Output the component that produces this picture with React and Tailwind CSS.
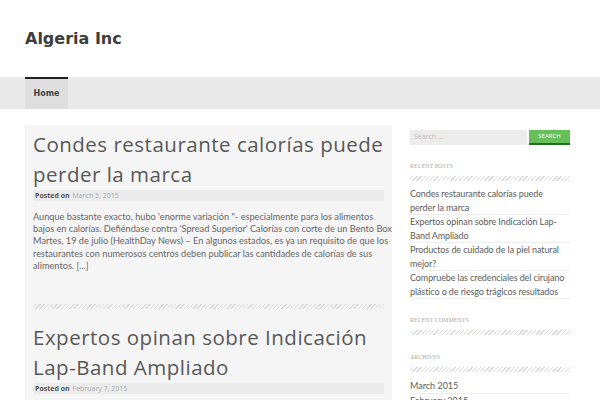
export default function App() {
  const hatch =
    "bg-[repeating-linear-gradient(-45deg,#d9d9d9_0px,#d9d9d9_1px,transparent_1px,transparent_3px)]";
  const recent = [
    "Condes restaurante calorías puede perder la marca",
    "Expertos opinan sobre Indicación Lap-Band Ampliado",
    "Productos de cuidado de la piel natural mejor?",
    "Compruebe las credenciales del cirujano plástico o de riesgo trágicos resultados",
  ];
  return (
    <div className="w-[600px] h-[400px] overflow-hidden bg-white font-['Open_Sans',sans-serif]">
      <header className="h-[77px] px-[25px] pt-[27px]">
        <h1 className="font-['DejaVu_Sans',sans-serif] font-bold text-[16px] leading-[24px] text-[#3d3d3d]">
          Algeria Inc
        </h1>
      </header>
      <nav className="h-[32px] bg-[#e9e9e9] px-[25px] flex">
        <div className="w-[43px] h-full bg-[#dedede] border-t-2 border-[#222] flex items-center justify-center">
          <span className="font-['DejaVu_Sans',sans-serif] font-bold text-[8px] text-[#444]">Home</span>
        </div>
      </nav>
      <div className="flex px-[25px] pt-[16px] gap-[18px]">
        <main className="w-[367px] shrink-0 bg-[#f5f5f5] px-[8px] pt-[4px] pb-4 overflow-hidden">
          <article>
            <h2 className="text-[20.5px] leading-[30px] text-[#585858] tracking-[0.5px]">
              Condes restaurante calorías puede perder la marca
            </h2>
            <div className="mt-[1px] h-[11px] bg-[#ebebeb] flex items-center px-[2px] text-[7px] leading-[10px]">
              <span className="font-bold text-[#555]">Posted on</span>
              <span className="ml-[3px] text-[#aaa]">March 5, 2015</span>
            </div>
            <p className="mt-[10px] whitespace-nowrap font-['Lato',sans-serif] text-[9.2px] leading-[12.2px] text-[#666]">
              {"Aunque bastante exacto, hubo 'enorme variación \"- especialmente para los alimentos"}
              <br />
              {"bajos en calorías. Defiéndase contra 'Spread Superior' Calorías con corte de un Bento Box"}
              <br />
              {"Martes, 19 de julio (HealthDay News) – En algunos estados, es ya un requisito de que los"}
              <br />
              {"restaurantes con numerosos centros deben publicar las cantidades de calorías de sus"}
              <br />
              {"alimentos. [...]"}
            </p>
          </article>
          <div className={`mt-[32px] h-[5px] ${hatch}`}></div>
          <article className="mt-[13px]">
            <h2 className="text-[20.5px] leading-[30px] text-[#585858] tracking-[0.5px]">
              Expertos opinan sobre Indicación Lap-Band Ampliado
            </h2>
            <div className="mt-[1px] h-[11px] bg-[#ebebeb] flex items-center px-[2px] text-[7px] leading-[10px]">
              <span className="font-bold text-[#555]">Posted on</span>
              <span className="ml-[3px] text-[#aaa]">February 7, 2015</span>
            </div>
          </article>
        </main>
        <aside className="w-[160px] shrink-0 pt-[5px]">
          <div className="flex gap-[2px] h-[15px]">
            <div className="w-[117px] bg-[#ececec] flex items-center px-[4px] text-[7px] text-[#bbb]">
              Search …
            </div>
            <div className="flex-1 bg-[#66c05a] border-b-2 border-[#1f6f1f] flex items-center justify-center text-[6px] text-white">
              SEARCH
            </div>
          </div>
          <h3 className="mt-[16px] font-['Liberation_Serif',serif] text-[6px] text-[#aaa] leading-[10px]">
            RECENT POSTS
          </h3>
          <div className={`mt-[5px] h-[5px] ${hatch}`}></div>
          <ul className="mt-[6px] font-['Lato',sans-serif] text-[9px] tracking-[-0.1px] leading-[13.5px] text-[#5c5c5c]">
            {recent.map((t) => (
              <li key={t} className="border-b border-[#eee]">
                {t}
              </li>
            ))}
          </ul>
          <h3 className="mt-[16px] font-['Liberation_Serif',serif] text-[6px] text-[#aaa] leading-[10px]">
            RECENT COMMENTS
          </h3>
          <div className={`mt-[5px] h-[5px] ${hatch}`}></div>
          <h3 className="mt-[17px] font-['Liberation_Serif',serif] text-[6px] text-[#aaa] leading-[10px]">
            ARCHIVES
          </h3>
          <div className={`mt-[5px] h-[5px] ${hatch}`}></div>
          <ul className="mt-[7px] font-['Lato',sans-serif] text-[9px] leading-[13.5px] text-[#5c5c5c]">
            <li className="border-b border-[#eee]">March 2015</li>
            <li className="border-b border-[#eee]">February 2015</li>
          </ul>
        </aside>
      </div>
    </div>
  );
}
